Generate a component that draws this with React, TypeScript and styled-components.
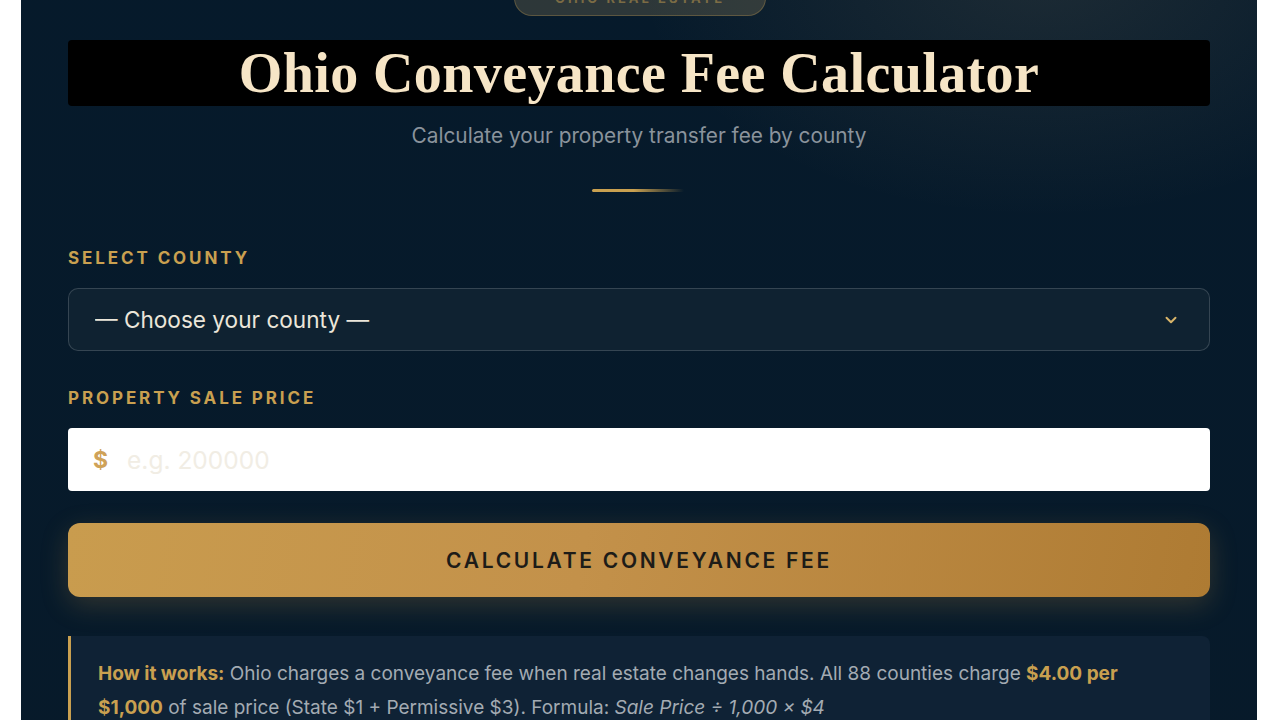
import React from "react";
import styled, { createGlobalStyle } from "styled-components";
import { ChevronDown } from "lucide-react";

const GlobalStyle = createGlobalStyle`
  html, body {
    margin: 0;
    padding: 0;
    background: #ffffff;
    overflow: hidden;
  }
  * { box-sizing: border-box; }
`;

const Page = styled.div`
  padding: 0 23px 0 21px;
  font-family: Inter, "Open Sans", sans-serif;
`;

const Card = styled.main`
  margin-top: -68px;
  padding: 48px 47px 60px;
  min-height: 900px;
  display: flex;
  flex-direction: column;
  background:
    radial-gradient(ellipse 560px 340px at 1020px 40px, rgba(190, 165, 120, 0.12), transparent 72%),
    linear-gradient(180deg, #061a2b 0%, #071a2a 100%);
`;

const Badge = styled.div`
  align-self: center;
  height: 36px;
  width: 252px;
  margin-left: 2px;
  border-radius: 18px;
  border: 1px solid rgba(201, 160, 80, 0.3);
  background: rgba(205, 175, 115, 0.2);
  color: rgba(201, 160, 80, 0.5);
  font-size: 13px;
  font-weight: 700;
  letter-spacing: 3px;
  display: flex;
  align-items: flex-start;
  padding-top: 9px;
  justify-content: center;
`;

const TitleBar = styled.h1`
  margin: 24px 0 0;
  height: 66px;
  background: #000000;
  border-radius: 4px;
  display: flex;
  align-items: center;
  justify-content: center;
  font-family: "Liberation Serif", "DejaVu Serif", serif;
  font-weight: 700;
  font-size: 56px;
  color: #f6e5c6;
  letter-spacing: 0.4px;
`;

const Subtitle = styled.p`
  margin: 18px 0 0;
  text-align: center;
  font-size: 20.8px;
  line-height: 24px;
  color: #8a939c;
`;

const Divider = styled.div`
  align-self: center;
  margin: 41px 0 0 -3px;
  width: 92px;
  height: 3px;
  border-radius: 2px;
  background: linear-gradient(90deg, #c9a050 0%, #c9a050 45%, rgba(201, 160, 80, 0) 100%);
`;

const Label = styled.label<{ $top: number }>`
  display: block;
  margin-top: ${(p) => p.$top}px;
  font-size: 17px;
  line-height: 20px;
  font-weight: 700;
  letter-spacing: 2.9px;
  color: #c9a050;
  text-transform: uppercase;
`;

const SelectWrap = styled.div`
  position: relative;
  margin-top: 20px;
`;

const Select = styled.select`
  width: 100%;
  height: 63px;
  appearance: none;
  padding: 0 26px;
  border-radius: 10px;
  border: 1px solid rgba(255, 255, 255, 0.16);
  background: #0f2231;
  color: #ebe6da;
  font-family: Inter, "Open Sans", sans-serif;
  font-size: 22.6px;
  outline: none;
`;

const Chevron = styled(ChevronDown)`
  position: absolute;
  right: 30px;
  top: 23px;
  color: #d9b56a;
  pointer-events: none;
`;

const PriceField = styled.div`
  margin-top: 20px;
  height: 63px;
  display: flex;
  align-items: center;
  gap: 17px;
  padding: 0 25px;
  background: #ffffff;
  border-radius: 4px;
`;

const Currency = styled.span`
  font-size: 23px;
  font-weight: 700;
  color: #cfa258;
`;

const PriceInput = styled.input`
  flex: 1;
  border: none;
  outline: none;
  background: transparent;
  font-family: Inter, "Open Sans", sans-serif;
  font-size: 24.5px;
  color: #333;
  &::placeholder {
    color: #f1ede4;
  }
`;

const CalcButton = styled.button`
  margin-top: 32px;
  height: 74px;
  border: none;
  border-radius: 12px;
  background: linear-gradient(100deg, #c99c4e 0%, #c3914a 45%, #ae7b33 100%);
  box-shadow: 0 8px 28px rgba(201, 150, 70, 0.22);
  color: #1d1c18;
  font-family: Inter, "Open Sans", sans-serif;
  font-size: 21px;
  font-weight: 600;
  letter-spacing: 2.7px;
  cursor: pointer;
`;

const InfoBox = styled.section`
  margin-top: 39px;
  padding: 21px 28px 24px 27px;
  background: #0f2235;
  border-left: 3px solid #c9a050;
  border-radius: 0 8px 8px 0;
  font-size: 19px;
  line-height: 34px;
  color: #a3abb3;
`;

const Gold = styled.strong`
  color: #c9a050;
  font-weight: 700;
`;

const App: React.FC = () => {
  return (
    <Page>
      <GlobalStyle />
      <Card>
        <Badge>OHIO REAL ESTATE</Badge>
        <TitleBar>Ohio Conveyance Fee Calculator</TitleBar>
        <Subtitle>Calculate your property transfer fee by county</Subtitle>
        <Divider />

        <Label $top={56} htmlFor="county">Select County</Label>
        <SelectWrap>
          <Select id="county" defaultValue="">
            <option value="">— Choose your county —</option>
          </Select>
          <Chevron size={18} strokeWidth={2.6} />
        </SelectWrap>

        <Label $top={37} htmlFor="price">Property Sale Price</Label>
        <PriceField>
          <Currency>$</Currency>
          <PriceInput id="price" placeholder="e.g. 200000" />
        </PriceField>

        <CalcButton>CALCULATE CONVEYANCE FEE</CalcButton>

        <InfoBox>
          <Gold>How it works:</Gold> Ohio charges a conveyance fee when real estate changes hands.
          All 88 counties charge <Gold>$4.00 per $1,000</Gold> of sale price (State $1 + Permissive $3).
          Formula: <em>Sale Price ÷ 1,000 × $4</em>
        </InfoBox>
      </Card>
    </Page>
  );
};

export default App;
